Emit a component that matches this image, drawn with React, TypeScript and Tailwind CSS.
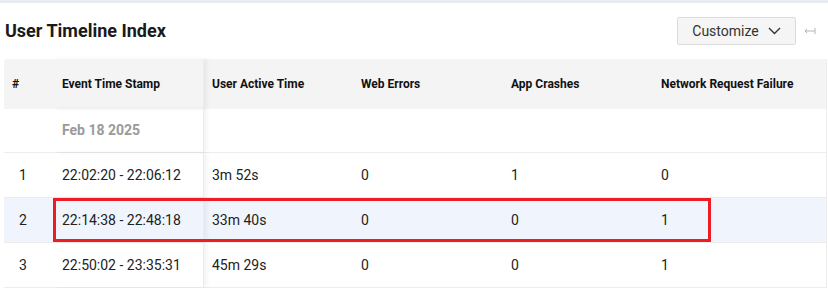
import React from "react";

const rows = [
  { n: "1", ts: "22:02:20 - 22:06:12", active: "3m 52s", web: "0", app: "1", net: "0" },
  { n: "2", ts: "22:14:38 - 22:48:18", active: "33m 40s", web: "0", app: "0", net: "1", hl: true },
  { n: "3", ts: "22:50:02 - 23:35:31", active: "45m 29s", web: "0", app: "0", net: "1" },
];

const grid = "grid grid-cols-[50px_150px_150px_150px_150px_1fr]";

export default function App() {
  return (
    <div className="w-[828px] h-[288px] overflow-hidden bg-white text-[#222]" style={{ fontFamily: "Roboto, 'Liberation Sans', sans-serif" }}>
      <div className="h-[3px] bg-[#e8ebef]" />
      <div className="flex items-center h-[56px] pl-[5px] pr-[4px]">
        <div className="text-[18px] font-bold text-[#1a1a1a] flex-1 -mt-[2px]">User Timeline Index</div>
        <button className="flex items-center gap-[9px] h-[28px] w-[119px] justify-center bg-[#f5f5f5] border border-[#dcdcdc] rounded-[2px] text-[14px] text-[#333]">
          Customize
          <svg width="13" height="8" viewBox="0 0 13 8" fill="none" stroke="#333" strokeWidth="1.4">
            <path d="M1 1l5.5 5.5L12 1" />
          </svg>
        </button>
        <div className="w-[28px] flex justify-center">
          <svg width="12" height="8" viewBox="0 0 12 8" fill="none" stroke="#b5b5b5" strokeWidth="1">
            <path d="M11 1v6M11 4H1M1 4l2-2M1 4l2 2" />
          </svg>
        </div>
      </div>
      <div className="relative ml-[4px] w-[823px] border-r border-[#eeeeee]">
        <div className={`${grid} h-[50px] bg-[#f4f4f4] items-center text-[12px] font-bold text-[#111] rounded-tl-[3px]`}>
          <div className="pl-[8px]">#</div>
          <div className="pl-[8px] h-full flex items-center shadow-[3px_0_4px_rgba(0,0,0,0.05)] border-r border-[#ececec]">Event Time Stamp</div>
          <div className="pl-[8px]">User Active Time</div>
          <div className="pl-[7px]">Web Errors</div>
          <div className="pl-[7px]">App Crashes</div>
          <div className="pl-[7px]">Network Request Failure</div>
        </div>
        <div className={`${grid} h-[44px] items-center border-b border-[#ececec] text-[14px]`}>
          <div />
          <div className="pl-[8px] h-full flex items-center font-bold text-[#9a9a9a] shadow-[3px_0_4px_rgba(0,0,0,0.05)] border-r border-[#ececec]">Feb 18 2025</div>
          <div />
          <div />
          <div />
          <div />
        </div>
        {rows.map((r) => (
          <div
            key={r.n}
            className={`${grid} h-[45px] items-center border-b border-[#ececec] text-[14px] text-[#222] ${r.hl ? "bg-[#f0f5fd]" : ""}`}
          >
            <div className="pl-[15px]">{r.n}</div>
            <div className="pl-[8px] h-full flex items-center shadow-[3px_0_4px_rgba(0,0,0,0.05)] border-r border-[#ececec]">{r.ts}</div>
            <div className="pl-[8px]">{r.active}</div>
            <div className="pl-[7px]">{r.web}</div>
            <div className="pl-[7px]">{r.app}</div>
            <div className="pl-[7px]">{r.net}</div>
          </div>
        ))}
        <div className="absolute left-[49px] top-[139px] w-[658px] h-[44px] border-[3px] border-[#ee1c25] pointer-events-none" />
      </div>
    </div>
  );
}
